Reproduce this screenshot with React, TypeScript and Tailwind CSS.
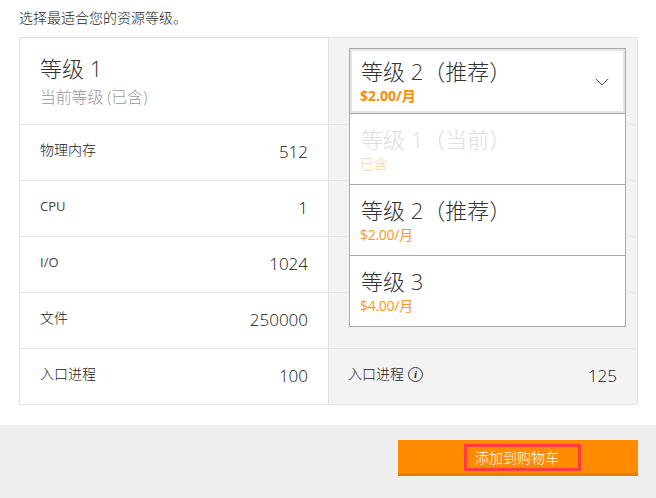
import { ChevronDown } from "lucide-react";

const font = "font-['Open_Sans','Noto_Sans_CJK_SC',sans-serif]";

const rows = [
  { label: "物理内存", left: "512", latin: false },
  { label: "CPU", left: "1", latin: true },
  { label: "I/O", left: "1024", latin: true },
  { label: "文件", left: "250000", latin: false },
  { label: "入口进程", left: "100", latin: false },
];

const options = [
  { name: "等级 1（当前）", price: "已含", dim: true },
  { name: "等级 2（推荐）", price: "$2.00/月", dim: false },
  { name: "等级 3", price: "$4.00/月", dim: false },
];

const App = () => {
  return (
    <div className={`w-[656px] h-[498px] overflow-hidden bg-white text-[#222] ${font}`}>
      <p className="h-[37px] pl-[19px] pt-[9px] text-[14px] font-light leading-[18px]">选择最适合您的资源等级。</p>

      <div className="mx-[19px] w-[619px] flex border border-[#e2e2e2]">
        {/* left column */}
        <div className="w-[309px] border-r border-[#e2e2e2]">
          <div className="h-[86px] pl-[20px] pt-[14px] font-light">
            <div className="text-[22px] leading-[32px] text-[#333]">等级 1</div>
            <div className="text-[16px] leading-[26px] tracking-[-0.2px] text-[#999]">当前等级 (已含)</div>
          </div>
          {rows.map((r) => (
            <div key={r.label} className="h-[56px] border-t border-[#e2e2e2] flex justify-between pl-[20px] pr-[20px]">
              <span className={`${r.latin ? "text-[13px] font-normal text-[#444]" : "text-[14px] font-light"} leading-[18px] pt-[16px]`}>{r.label}</span>
              <span className="text-[17px] font-light leading-[22px] pt-[16px] text-[#111]">{r.left}</span>
            </div>
          ))}
        </div>

        {/* right column */}
        <div className="relative flex-1 bg-[#f3f3f3]">
          <div className="h-[86px]" />
          {rows.map((r, i) => (
            <div key={r.label} className="h-[56px] border-t border-[#e2e2e2] flex justify-between pl-[20px] pr-[20px]">
              {i === 4 && (
                <>
                  <span className="flex items-start gap-[4px] text-[14px] font-light leading-[18px] pt-[16px] ml-[-1px]">
                    入口进程
                    <span className="mt-[2px] w-[15px] h-[15px] rounded-full border-[1.5px] border-[#333] flex items-center justify-center font-['Liberation_Serif',serif] italic font-bold text-[11px] leading-none">
                      i
                    </span>
                  </span>
                  <span className="text-[17px] font-light leading-[22px] pt-[16px] text-[#111]">125</span>
                </>
              )}
            </div>
          ))}

          {/* open select */}
          <div className="absolute left-[20px] top-[10px] w-[277px] border border-[#aaa] bg-white">
            <div className="h-[64px] border-2 border-[#e5e5e5] flex items-center justify-between pl-[9px] pr-[9px]">
              <div>
                <div className="text-[22px] font-light leading-[30px] mt-[-2px] text-[#333]">等级 2（推荐）</div>
                <div className="text-[14px] leading-[18px] font-bold text-[#ff8c00] ml-[-1px] mt-[1px]">$2.00/月</div>
              </div>
              <ChevronDown size={24} strokeWidth={1} className="text-[#555] mt-[2px]" />
            </div>
            {options.map((o) => (
              <div key={o.name} className="h-[71px] border-t border-[#aaa] pl-[11px] pt-[10px]">
                <div className={`text-[22px] font-light leading-[30px] ${o.dim ? "text-[#ddd]" : "text-[#333]"}`}>{o.name}</div>
                <div className={`text-[14px] leading-[18px] mt-[1px] ml-[-1px] tracking-[-0.3px] text-[#ff8c00] ${o.dim ? "font-light opacity-40" : "font-normal opacity-90"}`}>{o.price}</div>
              </div>
            ))}
          </div>
        </div>
      </div>

      {/* footer */}
      <div className="mt-[20px] h-[73px] bg-[#eee] flex justify-end pt-[15px] pr-[18px]">
        <button className="w-[240px] h-[36px] bg-[#ff8c00] border-b-[3px] border-[#e67e00] flex pl-[66px] pt-[4px]">
          <span className="w-[117px] h-[27px] border-[3px] border-[#ff3a44] text-white text-[14px] font-light leading-[21px] pl-[8px] text-left">
            添加到购物车
          </span>
        </button>
      </div>
    </div>
  );
};

export default App;
